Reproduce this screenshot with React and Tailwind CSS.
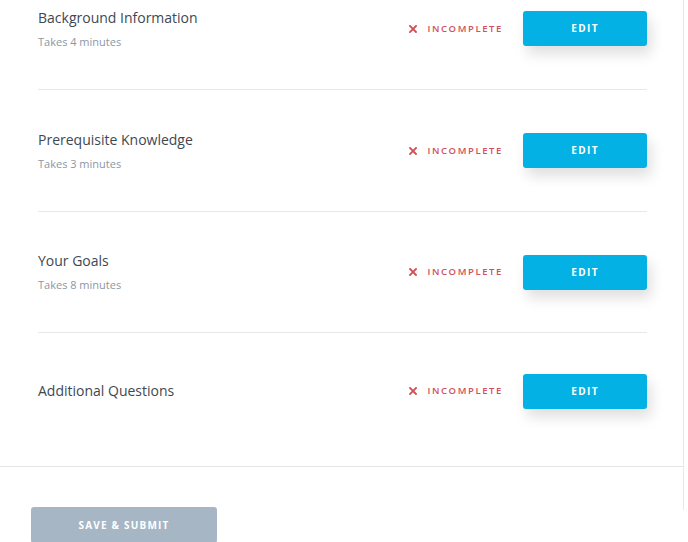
import React from "react";

const rows = [
  { title: "Background Information", sub: "Takes 4 minutes", h: "h-[122px] border-b border-[#e6e8ea]" },
  { title: "Prerequisite Knowledge", sub: "Takes 3 minutes", h: "h-[122px] border-b border-[#e6e8ea]" },
  { title: "Your Goals", sub: "Takes 8 minutes", h: "h-[121px] border-b border-[#e6e8ea]" },
  { title: "Additional Questions", sub: null, h: "h-[116px]" },
];

function Row({ title, sub, h }) {
  return (
    <div className={`flex items-center justify-between ${h}`}>
      <div className="flex flex-col">
        <div className="text-[14px] leading-[20px] text-[#3e4852]">{title}</div>
        {sub && (
          <div className="mt-[6px] text-[11px] leading-[16px] text-[#8a98a4]">{sub}</div>
        )}
      </div>
      <div className="flex items-center">
        <div className="flex items-center text-[#d2505a]">
          <svg width="8" height="8" viewBox="0 0 8 8" className="mr-[10px]">
            <path d="M1 1L7 7M7 1L1 7" stroke="#d2505a" strokeWidth="1.9" strokeLinecap="square" />
          </svg>
          <span className="text-[9.5px] font-semibold tracking-[1.6px] leading-none">INCOMPLETE</span>
        </div>
        <button className="ml-[20px] w-[124px] h-[35px] rounded-[3px] bg-[#03b1e5] text-white text-[10px] font-bold tracking-[1.4px] shadow-[4px_8px_14px_rgba(0,0,0,0.13)]">
          EDIT
        </button>
      </div>
    </div>
  );
}

export default function App() {
  return (
    <div
      className="w-[688px] h-[542px] overflow-hidden bg-white"
      style={{ fontFamily: '"Open Sans", sans-serif' }}
    >
      <div className="w-[684px] h-full border-r border-[#e6e8ea]">
        <div className="-mt-[32px] pr-[36px] pl-[38px] pb-[17px]">
          {rows.map((r, i) => (
            <Row key={i} {...r} />
          ))}
        </div>
        <div className="border-t border-[#e2e4e6] pt-[40px] pl-[31px]">
          <button className="w-[186px] h-[36px] rounded-[3px] bg-[#a6b6c5] text-white text-[10px] font-bold tracking-[1.2px]">
            SAVE &amp; SUBMIT
          </button>
        </div>
      </div>
    </div>
  );
}
